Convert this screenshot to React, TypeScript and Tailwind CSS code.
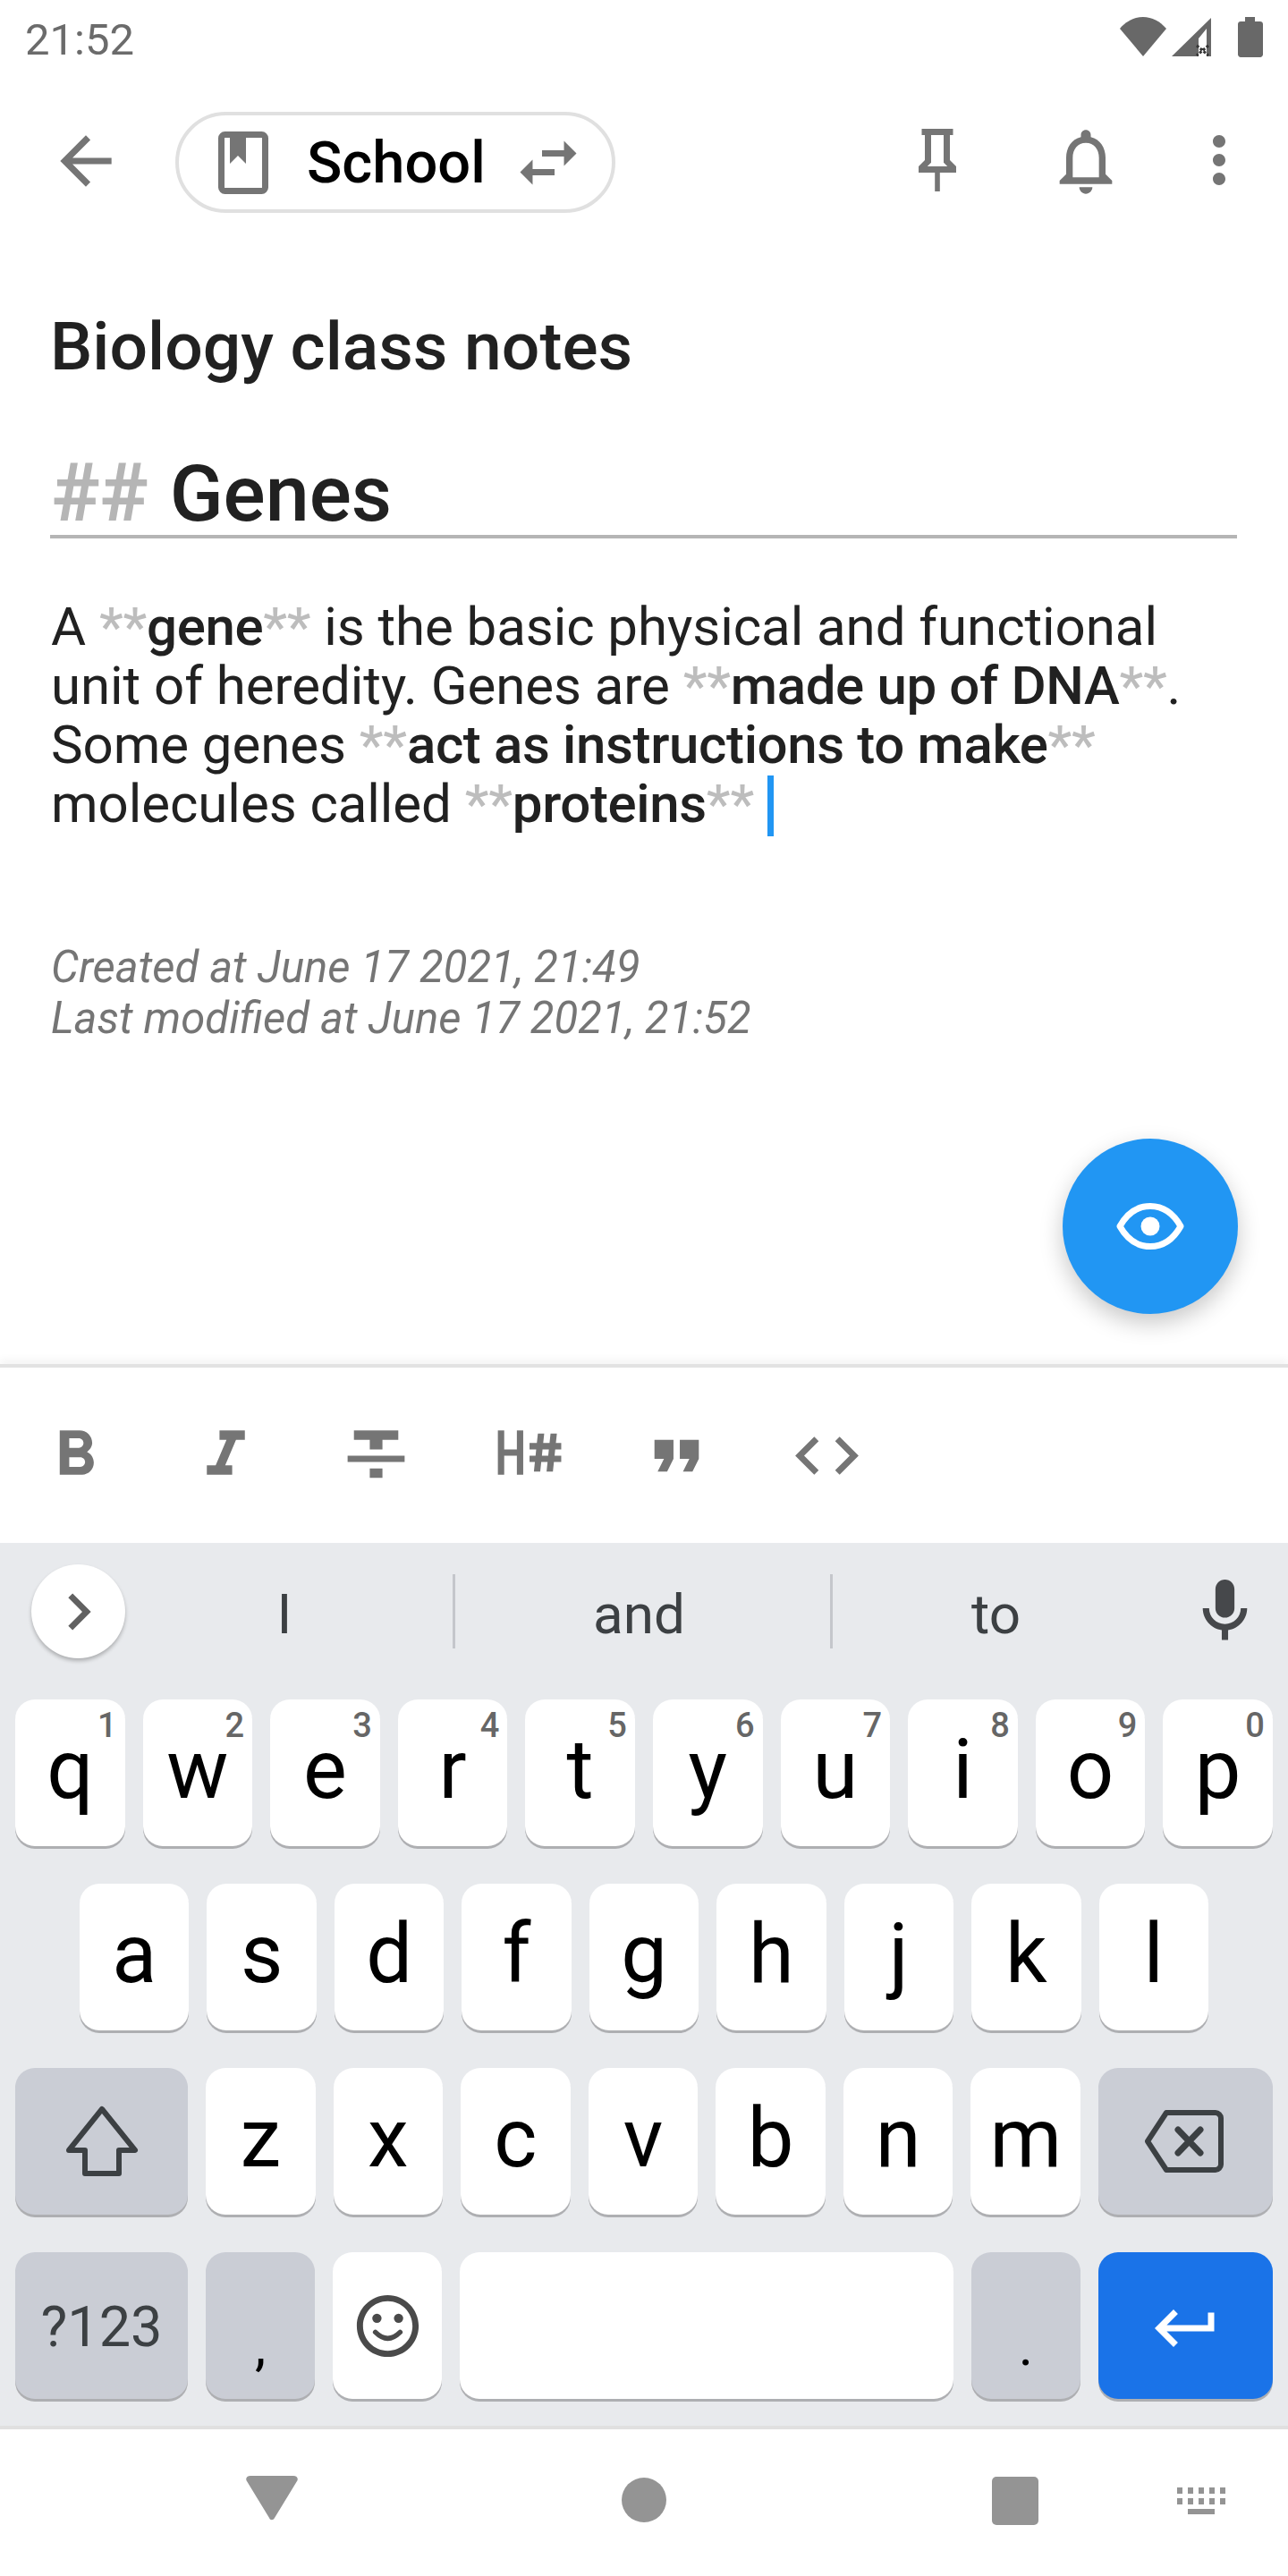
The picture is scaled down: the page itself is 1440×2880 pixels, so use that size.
const FONT = "font-['Roboto',sans-serif]"

const Icon = ({ d, size, className, fill = '#757575' }: { d: string; size: number; className?: string; fill?: string }) => (
  <svg width={size} height={size} viewBox="0 0 24 24" className={className} fill={fill}>
    <path d={d} />
  </svg>
)

const P = {
  back: 'M20 11H7.83l5.59-5.59L12 4l-8 8 8 8 1.41-1.41L7.83 13H20v-2z',
  swap: 'M6.99 11L3 15l3.99 4v-3H14v-2H6.99v-3zM21 9l-3.99-4v3H10v2h7.01v3L21 9z',
  pin: 'M16,12V4H17V2H7V4H8V12L6,14V16H11.2V22H12.8V16H18V14L16,12M8.8,14L10,12.8V4H14V12.8L15.2,14H8.8Z',
  bell: 'M12 22c1.1 0 2-.9 2-2h-4c0 1.1.89 2 2 2zm6-6v-5c0-3.07-1.64-5.64-4.5-6.32V4c0-.83-.67-1.5-1.5-1.5s-1.5.67-1.5 1.5v.68C7.63 5.36 6 7.92 6 11v5l-2 2v1h16v-1l-2-2zm-2 1H8v-6c0-2.48 1.51-4.5 4-4.5s4 2.02 4 4.5v6z',
  more: 'M12 8c1.1 0 2-.9 2-2s-.9-2-2-2-2 .9-2 2 .9 2 2 2zm0 2c-1.1 0-2 .9-2 2s.9 2 2 2 2-.9 2-2-.9-2-2-2zm0 6c-1.1 0-2 .9-2 2s.9 2 2 2 2-.9 2-2-.9-2-2-2z',
  bold: 'M15.6 10.79c.97-.67 1.65-1.77 1.65-2.79 0-2.26-1.75-4-4-4H7v14h7.04c2.09 0 3.71-1.7 3.71-3.79 0-1.52-.86-2.82-2.15-3.42zM10 6.5h3c.83 0 1.5.67 1.5 1.5s-.67 1.5-1.5 1.5h-3v-3zm3.5 9H10v-3h3.5c.83 0 1.5.67 1.5 1.5s-.67 1.5-1.5 1.5z',
  italic: 'M10 4v3h2.21l-3.42 8H6v3h8v-3h-2.21l3.42-8H18V4z',
  strike: 'M10 19h4v-3h-4v3zM5 4v3h5v3h4V7h5V4H5zM3 14h18v-2H3v2z',
  header: 'M3,4H5V10H9V4H11V18H9V12H5V18H3V4M13,8H15.31L15.63,5H17.63L17.31,8H19.31L19.63,5H21.63L21.31,8H23V10H21.1L20.9,12H23V14H20.69L20.37,17H18.37L18.69,14H16.69L16.37,17H14.37L14.69,14H13V12H14.9L15.1,10H13V8M17.1,10L16.9,12H18.9L19.1,10H17.1Z',
  quote: 'M6 17h3l2-4V7H5v6h3zm8 0h3l2-4V7h-6v6h3z',
  code: 'M9.4 16.6L4.8 12l4.6-4.6L8 6l-6 6 6 6 1.4-1.4zm5.2 0l4.6-4.6-4.6-4.6L16 6l6 6-6 6-1.4-1.4z',
  mic: 'M12 14c1.66 0 3-1.34 3-3V5c0-1.66-1.34-3-3-3S9 3.34 9 5v6c0 1.66 1.34 3 3 3z M17 11c0 2.76-2.24 5-5 5s-5-2.24-5-5H5c0 3.53 2.61 6.43 6 6.92V21h2v-3.08c3.39-.49 6-3.39 6-6.92h-2z',
  chevron: 'M8.59 16.59L13.17 12 8.59 7.41 10 6l6 6-6 6-1.41-1.41z',
  enter: 'M19 7v4H5.83l3.58-3.59L8 6l-6 6 6 6 1.41-1.41L5.83 13H21V7z',
}

const Mark = ({ children }: { children: string }) => <span className="text-[#bdbdbd] font-medium">{children}</span>
const Strong = ({ children }: { children: string }) => <span className="font-medium tracking-[-0.006em]">{children}</span>

function StatusBar() {
  return (
    <div className="h-[90px] flex justify-between pl-[28px] pr-[28px] shrink-0">
      <span className="text-[49px] leading-[56px] pt-[17px] text-[#6b6b6b] h-[73px]">21:52</span>
      <div className="flex items-start pt-[19px] gap-[5px]">
        <svg width="52" height="45" viewBox="1 0 52 45" fill="#686868">
          <path d="M1 13C8 5 17 0 27 0s19 5 26 13L27 44z" />
        </svg>
        <svg width="46" height="45" viewBox="0 0 46 45" className="mr-[24px]" fill="#686868">
          <path fillRule="evenodd" d="M45 1V44H1zM40 13l-9 11v20h9z" />
          <path d="M29 32l13 11M42 32L29 43" stroke="#333" strokeWidth="3" strokeDasharray="3 2" />
        </svg>
        <svg width="28" height="45" viewBox="0 0 28 45" fill="#686868">
          <path d="M8 0h11v5h6c1.500 0 3 1 3 3v34c0 1.500-1.500 3-3 3H3c-1.500 0-3-1.500-3-3V8c0-2 1.500-3 3-3h5z" />
        </svg>
      </div>
    </div>
  )
}

function TopBar() {
  return (
    <div className="h-[184px] shrink-0 flex items-start pt-[35px]">
      <Icon d={P.back} size={86} className="ml-[53px] mt-[12px]" />
      <div className="ml-[57px] w-[492px] h-[113px] rounded-full border-[4px] border-[#e0e0e0] flex items-center pl-[44px]">
        <svg width="56" height="70" viewBox="0 0 56 70" fill="none">
          <rect x="3.500" y="3.500" width="49" height="63" rx="4" stroke="#757575" strokeWidth="7" />
          <path d="M13 5h18v31l-9-9-9 9z" fill="#757575" />
        </svg>
        <span className="ml-[43px] mt-[2px] text-[65px] leading-none font-medium text-black">School</span>
        <Icon d={P.swap} size={84} className="ml-[28px] mt-[1px] shrink-0" />
      </div>
      <div className="ml-auto flex items-start pr-[35px] pt-[12px]">
        <Icon d={P.pin} size={84} className="mr-[80px]" />
        <Icon d={P.bell} size={88} className="mr-[63px] mt-[-1px]" />
        <Icon d={P.more} size={84} />
      </div>
    </div>
  )
}

function Editor() {
  return (
    <div className="relative flex-1 px-[57px] pt-[69px] text-[#212121]">
      <h1 className="ml-[-1px] text-[75px] leading-[88px] font-medium">Biology class notes</h1>
      <div className="mt-[74px] ml-[-1px] w-[1327px] border-b-[4px] border-[#b5b5b5] text-[88px] leading-[93px] font-medium">
        <span className="text-[#b5b5b5] text-[91px] font-bold ml-[2px] mr-[2px]">##</span> Genes
      </div>
      <p className="mt-[66px] text-[60px] leading-[66px] tracking-[-0.001em] w-[1340px]">
        A <Mark>**</Mark><Strong>gene</Strong><Mark>**</Mark> is the basic physical and functional<br />
        unit of heredity. Genes are <Mark>**</Mark><Strong>made up of DNA</Strong><Mark>**</Mark>.<br />
        Some genes <Mark>**</Mark><Strong>act as instructions to make</Strong><Mark>**</Mark><br />
        molecules called <Mark>**</Mark><Strong>proteins</Strong><Mark>**</Mark>
        <span className="inline-block w-[7px] h-[68px] bg-[#2196f3] ml-[15px] align-[-16px]" />
      </p>
      <div className="mt-[118px] text-[49px] leading-[57px] italic text-[#757575]">
        <div>Created at June 17 2021, 21:49</div>
        <div>Last modified at June 17 2021, 21:52</div>
      </div>
      <button className="absolute right-[56px] bottom-[56px] w-[196px] h-[196px] rounded-full bg-[#2196f3] shadow-[0_10px_26px_rgba(0,0,0,0.22)] flex items-center justify-center">
        <svg width="76" height="52" viewBox="0 0 76 52" fill="none">
          <path d="M4 26C13 10 24 3.500 38 3.500S63 10 72 26C63 42 52 48.500 38 48.500S13 42 4 26z" stroke="#ffffff" strokeWidth="7" strokeLinejoin="round" />
          <circle cx="38" cy="26" r="10.500" fill="#ffffff" />
        </svg>
      </button>
    </div>
  )
}

function Toolbar() {
  const icons = [P.bold, P.italic, P.strike, P.header, P.quote, P.code]
  return (
    <div className="h-[200px] shrink-0 border-t-[4px] border-[#e2e2e2] flex items-center shadow-[0_-6px_8px_rgba(0,0,0,0.04)] z-10 bg-white">
      {icons.map((d) => (
        <div key={d} className="w-[168px] flex justify-center">
          <Icon d={d} size={85} />
        </div>
      ))}
    </div>
  )
}

function Key({ label, hint }: { label: string; hint?: string }) {
  return (
    <div className="relative h-[164px] flex-1 rounded-[22px] bg-white shadow-[0_3px_0_#aeafb2] text-[92px] leading-[164px] text-center text-black">
      <span className="block mt-[-3px]">{label}</span>
      {hint && <span className="absolute right-[9px] top-[7px] text-[38px] leading-[44px] font-medium text-[#666]">{hint}</span>}
    </div>
  )
}

function Keyboard() {
  const fn = 'h-[164px] rounded-[22px] bg-[#cacdd5] shadow-[0_3px_0_#aeafb2] flex items-center justify-center'
  return (
    <div className="h-[987px] shrink-0 bg-[#e8eaed] flex flex-col">
      <div className="h-[153px] flex items-center text-[62px] text-[#3c4043] shrink-0">
        <div className="ml-[35px] mr-[-10px] w-[105px] h-[105px] rounded-full bg-white shadow-[0_3px_4px_rgba(0,0,0,0.25)] flex items-center justify-center shrink-0">
          <Icon d={P.chevron} size={82} fill="#616161" />
        </div>
        <div className="w-[376px] text-center shrink-0 mt-[6px]">I</div>
        <div className="w-[3px] h-[83px] bg-[#c4c6cb] shrink-0" />
        <div className="w-[419px] pr-[8px] text-center shrink-0 mt-[6px]">and</div>
        <div className="w-[3px] h-[83px] bg-[#c4c6cb] shrink-0" />
        <div className="w-[369px] pr-[4px] text-center shrink-0 mt-[6px]">to</div>
        <Icon d={P.mic} size={85} fill="#46484b" className="ml-[27px] shrink-0" />
      </div>
      <div className="pt-[22px] flex flex-col gap-[42px]">
        <div className="flex gap-[20px] px-[17px]">
          {['q', 'w', 'e', 'r', 't', 'y', 'u', 'i', 'o', 'p'].map((k, i) => (
            <Key key={k} label={k} hint={String((i + 1) % 10)} />
          ))}
        </div>
        <div className="flex gap-[20px] px-[89px]">
          {['a', 's', 'd', 'f', 'g', 'h', 'j', 'k', 'l'].map((k) => (
            <Key key={k} label={k} />
          ))}
        </div>
        <div className="flex gap-[20px] px-[17px]">
          <div className={`${fn} w-[193px] shrink-0`}>
            <svg width="84" height="80" viewBox="0 0 84 80" fill="none">
              <path d="M42 4L79 50H61V76H23V50H5z" stroke="#3c4043" strokeWidth="6" strokeLinejoin="round" />
            </svg>
          </div>
          {['z', 'x', 'c', 'v', 'b', 'n', 'm'].map((k) => (
            <Key key={k} label={k} />
          ))}
          <div className={`${fn} w-[195px] shrink-0`}>
            <svg width="88" height="70" viewBox="0 0 88 70" fill="none" stroke="#3c4043" strokeLinejoin="round" strokeLinecap="round" className="mr-[4px]">
              <path d="M24 3H79c3 0 6 3 6 6V61c0 3-3 6-6 6H24L3 35z" strokeWidth="6" />
              <path d="M37 22L62 48M62 22L37 48" strokeWidth="7" />
            </svg>
          </div>
        </div>
        <div className="flex gap-[20px] px-[17px]">
          <div className={`${fn} w-[193px] shrink-0 text-[63px] text-[#3c4043]`}><span className="mt-[5px]">?123</span></div>
          <div className={`${fn} w-[122px] shrink-0 text-[62px] text-black`}><span className="mt-[44px]">,</span></div>
          <div className="h-[164px] w-[122px] shrink-0 rounded-[22px] bg-white shadow-[0_3px_0_#aeafb2] flex items-center justify-center">
            <svg width="83" height="83" viewBox="0 0 24 24" fill="#4a4a4a">
              <path d="M11.99 2C6.47 2 2 6.48 2 12s4.47 10 9.99 10C17.52 22 22 17.52 22 12S17.52 2 11.99 2zM12 20c-4.420 0-8-3.580-8-8s3.580-8 8-8 8 3.580 8 8-3.580 8-8 8z" />
              <circle cx="15.500" cy="9.500" r="1.500" />
              <circle cx="8.500" cy="9.500" r="1.500" />
              <path d="M8 14q4 4 8 0" fill="none" stroke="#4a4a4a" strokeWidth="1.600" strokeLinecap="round" />
            </svg>
          </div>
          <div className="h-[164px] flex-1 rounded-[22px] bg-white shadow-[0_3px_0_#aeafb2]" />
          <div className={`${fn} w-[122px] shrink-0 text-[62px] text-black`}><span className="mt-[44px]">.</span></div>
          <div className="h-[164px] w-[195px] shrink-0 rounded-[22px] bg-[#1a73e8] shadow-[0_3px_0_#aeafb2] flex items-center justify-center">
            <Icon d={P.enter} size={84} fill="#ffffff" className="mt-[5px]" />
          </div>
        </div>
      </div>
    </div>
  )
}

function NavBar() {
  return (
    <div className="h-[168px] shrink-0 border-t-[4px] border-[#e0e0e0] bg-white flex items-start pt-[52px]">
      <svg width="58" height="50" viewBox="0 0 58 50" fill="#949494" className="ml-[275px]">
        <path d="M5 0H53c4 0 6 3 4 6L32 47c-1.500 3-5 3-6 0L1 6C-1 3 1 0 5 0z" />
      </svg>
      <div className="ml-[362px] mt-[2px] w-[50px] h-[50px] rounded-full bg-[#949494]" />
      <div className="ml-[364px] mt-[1px] w-[52px] h-[54px] rounded-[5px] bg-[#949494]" />
      <svg width="54" height="30" viewBox="0 0 54 30" fill="#949494" className="ml-[155px] mt-[13px]">
        <path d="M0 0h6v7H0zM12 0h6v7h-6zM24 0h6v7h-6zM36 0h6v7h-6zM48 0h6v7h-6zM0 12h6v7H0zM12 12h6v7h-6zM24 12h6v7h-6zM36 12h6v7h-6zM48 12h6v7h-6zM12 24h30v6H12z" />
      </svg>
    </div>
  )
}

export default function App() {
  return (
    <div className={`w-[1440px] h-[2880px] bg-white flex flex-col overflow-hidden ${FONT}`}>
      <StatusBar />
      <TopBar />
      <Editor />
      <Toolbar />
      <Keyboard />
      <NavBar />
    </div>
  )
}
